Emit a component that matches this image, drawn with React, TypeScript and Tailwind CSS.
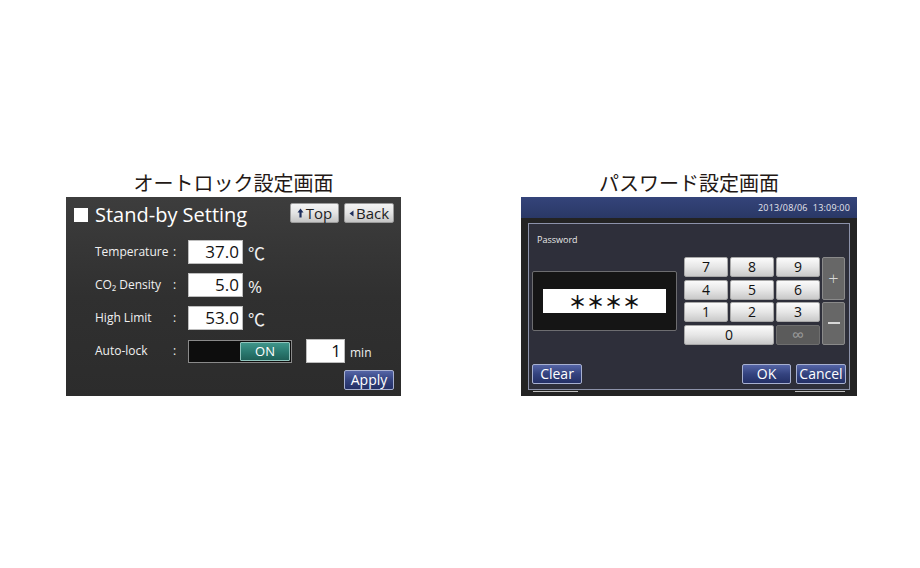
export default function App() {
  return (
    <div
      className="w-[920px] h-[568px] bg-white flex items-start pt-[171px] pl-[66px] gap-[120px]"
      style={{ fontFamily: '"Open Sans", "Noto Sans CJK JP", sans-serif' }}
    >
      <AutoLockScreen />
      <PasswordScreen />
    </div>
  )
}

function Title({ children }: { children: string }) {
  return (
    <div
      className="text-[20px] leading-[24px] text-[#231815] text-center mb-[2px]"
      style={{ fontFamily: '"Noto Sans CJK JP", sans-serif' }}
    >
      {children}
    </div>
  )
}

function GrayButton({ children }: { children: React.ReactNode }) {
  return (
    <div className="h-[20px] flex items-center justify-center gap-[2px] rounded-[2px] border border-[#9a9a9a] bg-gradient-to-b from-[#f4f4f4] via-[#e4e4e4] to-[#c4c4c4] text-[15px] leading-none text-[#1e1e1e]">
      {children}
    </div>
  )
}

function NavyButton({ label, w }: { label: string; w: string }) {
  return (
    <div
      className={`${w} h-[20px] flex items-center justify-center rounded-[2px] border border-[#a7b0d0] bg-gradient-to-b from-[#5565a6] via-[#34437f] to-[#243066] text-[14px] leading-none text-white`}
    >
      {label}
    </div>
  )
}

function ValueRow({ label, value, unit }: { label: string; value: string; unit: string }) {
  return (
    <div className="flex items-center h-[24px]">
      <span className="w-[78px] text-[12px] text-[#f0f0f0]">{label}</span>
      <span className="w-[15px] text-[12px] text-[#f0f0f0]">:</span>
      <div className="w-[55px] h-[24px] bg-white border border-[#bdbdbd] flex items-center justify-end pr-[3px] text-[17px] text-[#111]">
        {value}
      </div>
      <span className="ml-[5px] mt-[3px] text-[17px] text-[#f0f0f0] leading-none">{unit}</span>
    </div>
  )
}

function AutoLockScreen() {
  return (
    <div className="flex flex-col items-center">
      <Title>オートロック設定画面</Title>
      <div className="w-[335px] h-[199px] bg-gradient-to-b from-[#3d3d3d] via-[#303030] to-[#2c2c2c] flex flex-col">
        <div className="flex items-start justify-between pl-[8px] pr-[7px] pt-[6px]">
          <div className="flex items-center gap-[7px] pt-[2px]">
            <div className="w-[14px] h-[14px] bg-white" />
            <span className="text-[20px] leading-[20px] text-white">Stand-by Setting</span>
          </div>
          <div className="flex gap-[5px]">
            <div className="w-[49px]">
              <GrayButton>
                <svg width="7" height="10" viewBox="0 0 7 10">
                  <path d="M3.5 0.5 L6.5 4.5 H4.6 V9.5 H2.4 V4.5 H0.5 Z" fill="#1d2d5c" />
                </svg>
                <span>Top</span>
              </GrayButton>
            </div>
            <div className="w-[50px]">
              <GrayButton>
                <svg width="5" height="7" viewBox="0 0 5 7">
                  <path d="M0.5 3.5 L4.5 0.5 V6.5 Z" fill="#1d2d5c" />
                </svg>
                <span>Back</span>
              </GrayButton>
            </div>
          </div>
        </div>
        <div className="flex flex-col gap-[9px] pl-[29px] mt-[15px]">
          <ValueRow label="Temperature" value="37.0" unit="℃" />
          <ValueRow label={'CO\u2082 Density'} value="5.0" unit="%" />
          <ValueRow label="High Limit" value="53.0" unit="℃" />
          <div className="flex items-center h-[24px]">
            <span className="w-[78px] text-[12px] text-[#f0f0f0]">Auto-lock</span>
            <span className="w-[15px] text-[12px] text-[#f0f0f0]">:</span>
            <div className="w-[104px] h-[23px] bg-[#0d0d0d] border border-[#8a8a8a] flex items-center justify-end pr-[1px]">
              <div className="w-[50px] h-[19px] rounded-[1px] border border-[#8fc4bc] bg-gradient-to-b from-[#3f958a] via-[#2b7b71] to-[#1f6158] flex items-center justify-center text-[13px] leading-none text-white">
                ON
              </div>
            </div>
            <div className="ml-[14px] w-[39px] h-[24px] bg-white border border-[#bdbdbd] flex items-center justify-end pr-[3px] text-[17px] text-[#111]">
              1
            </div>
            <span className="ml-[5px] text-[12px] text-[#f0f0f0] mt-[4px]">min</span>
          </div>
        </div>
        <div className="flex justify-end pr-[7px] mt-[7px]">
          <NavyButton label="Apply" w="w-[50px]" />
        </div>
      </div>
    </div>
  )
}

function Key({ children, className = '' }: { children: React.ReactNode; className?: string }) {
  return (
    <div
      className={`relative flex items-center justify-center rounded-[2px] border border-[#a8a8a8] bg-gradient-to-b from-[#fbfbfb] via-[#e6e6e6] to-[#c9c9c9] text-[14px] font-medium leading-none text-[#111] ${className}`}
    >
      {children}
    </div>
  )
}

function PasswordScreen() {
  return (
    <div className="flex flex-col items-center">
      <Title>パスワード設定画面</Title>
      <div className="w-[336px] h-[199px] bg-[#232323] flex flex-col">
        <div className="h-[21px] bg-gradient-to-b from-[#34447a] to-[#2a3866] flex items-center justify-end pr-[7px] text-[9px] text-[#e6e6ee] tracking-[0.2px]">
          2013/08/06&nbsp;&nbsp;13:09:00
        </div>
        <div className="mx-[7px] mt-[5px] h-[167px] border border-[#8c92aa] bg-[#2e2f3a] flex flex-col px-[3px]">
          <div className="pl-[5px] pt-[10px] text-[9px] leading-[11px] text-[#e8e8e8]">Password</div>
          <div className="flex items-start gap-[7px] mt-[12px]">
            <div className="mt-[14px] w-[145px] h-[60px] rounded-[2px] border border-[#6d6d70] bg-[#151515] flex items-center justify-center">
              <div
                className="w-[123px] h-[24px] bg-white flex items-center justify-center text-[18px] font-bold leading-none text-[#111]"
                style={{ fontFamily: '"Noto Sans CJK JP", sans-serif' }}
              >
                ＊＊＊＊
              </div>
            </div>
            <div className="grid grid-cols-[44px_44px_44px_23px] grid-rows-[20px_20px_20px_20px] gap-x-[2px] gap-y-[2.5px]">
              <Key>7</Key>
              <Key>8</Key>
              <Key>9</Key>
              <div className="row-span-2 rounded-[2px] border border-[#8a8a8a] bg-[#676767] flex items-center justify-center text-[18px] font-light text-[#d8d8d8] leading-none">
                +
              </div>
              <Key>4</Key>
              <Key>5</Key>
              <Key>6</Key>
              <Key>1</Key>
              <Key>2</Key>
              <Key>3</Key>
              <div className="row-span-2 rounded-[2px] border border-[#8a8a8a] bg-[#676767] flex items-center justify-center">
                <div className="w-[12px] h-[2px] bg-[#d8d8d8]" />
              </div>
              <Key className="col-span-2">0</Key>
              <div className="rounded-[2px] border border-[#6e6e6e] bg-[#5b5b5b] flex items-center justify-center text-[17px] leading-none text-[#9a9a9a]">
                ∞
              </div>
            </div>
          </div>
          <div className="flex items-center justify-between mt-[19px]">
            <NavyButton label="Clear" w="w-[50px]" />
            <div className="flex gap-[5px]">
              <NavyButton label="OK" w="w-[49px]" />
              <NavyButton label="Cancel" w="w-[50px]" />
            </div>
          </div>
        </div>
        <div className="flex justify-between mx-[12px] mt-[1px]">
          <div className="w-[45px] h-[1px] bg-[#bdbdbd]" />
          <div className="w-[50px] h-[1px] bg-[#bdbdbd]" />
        </div>
      </div>
    </div>
  )
}
